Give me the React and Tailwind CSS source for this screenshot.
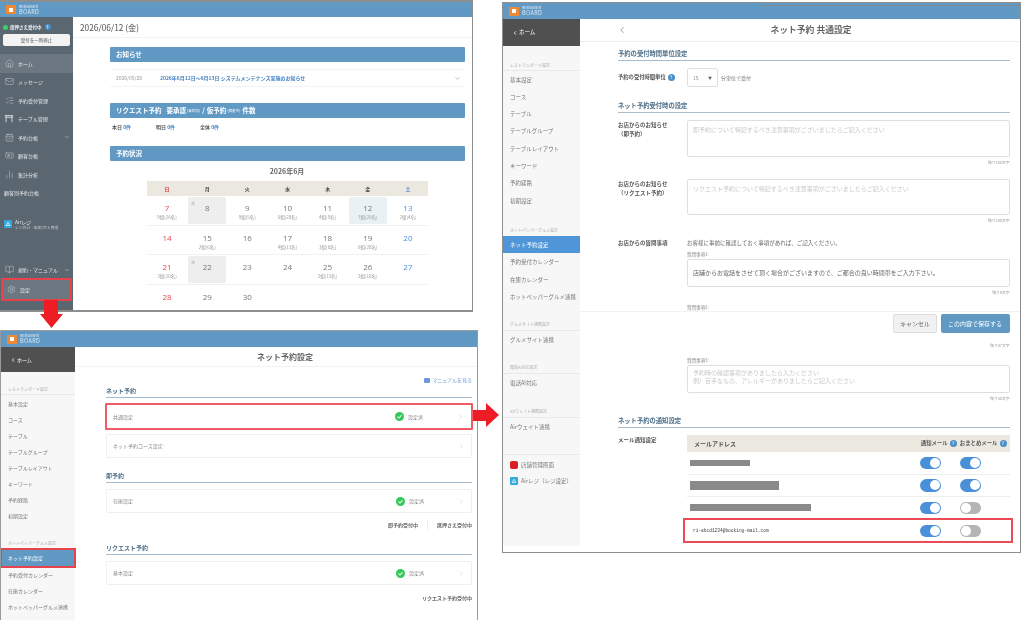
import React from "react";
import { House, Mail, ListChecks, CalendarDays, IdCard, ChartNoAxesColumn, BookOpen, Settings, ChevronDown, ChevronRight, ChevronLeft } from "lucide-react";

const CJK = { fontFamily: '"Noto Sans CJK JP","Noto Sans",sans-serif' };

function Logo() {
  return (
    <div className="flex items-center gap-[3px]">
      <div className="w-[10px] h-[9px] bg-[#ee8a35] flex items-center justify-center">
        <div className="w-[4px] h-[4px] bg-white" />
      </div>
      <div className="flex flex-col text-[#dfeaf3]">
        <span className="text-[3.8px] leading-[4px] h-[4px] whitespace-nowrap">Restaurant</span>
        <span className="text-[5.5px] leading-[6px] h-[6px] tracking-[0.4px]">BOARD</span>
      </div>
    </div>
  );
}

function Help({ size = "w-[7px] h-[7px]" }) {
  return <span className={`${size} rounded-full bg-[#4a8fc8] text-white text-[4.5px] leading-none inline-flex items-center justify-center shrink-0`}>?</span>;
}

function TableIcon() {
  return (
    <svg viewBox="0 0 12 12" className="w-[11px] h-[11px]" fill="none" stroke="#d5dade" strokeWidth="1.1">
      <path d="M1 2.5h10M2.5 2.5v8M9.5 2.5v8M1 4.5h10" />
    </svg>
  );
}

function NavDark({ icon, label, active, chevron, boxed }) {
  return (
    <div className={`flex items-center pl-[4px] pr-[3px] gap-[3px] text-[5px] text-[#e4e7ea] ${active ? "bg-[#6c7781]" : ""} ${boxed ? "bg-[#6c7781] outline-2 outline-[#e8434d] -outline-offset-1 h-[21px] mx-[2px] pl-[2px]" : "h-[18.5px]"}`}>
      <span className="w-[10px] flex justify-center shrink-0">{icon}</span>
      <span className="ml-[1px] flex-1 whitespace-nowrap">{label}</span>
      {chevron && <ChevronDown size={6} color="#d5dade" />}
    </div>
  );
}

function Bar({ children, className = "" }) {
  return <div className={`h-[15px] rounded-[1px] bg-[#6199c5] text-white text-[6.5px] font-bold flex items-center pl-[6px] whitespace-nowrap ${className}`}>{children}</div>;
}

const cal = [
  [["7", "9組(26名)", "r"], ["8", "", "o"], ["9", "9組(5名)"], ["10", "6組(20名)"], ["11", "4組(9名)"], ["12", "7組(26名)", "t"], ["13", "2組(4名)", "b"]],
  [["14", "", "r"], ["15", "2組(6名)"], ["16", ""], ["17", "4組(13名)"], ["18", "3組(8名)"], ["19", "6組(28名)"], ["20", "", "b"]],
  [["21", "3組(10名)", "r"], ["22", "", "o"], ["23", ""], ["24", ""], ["25", "2組(15名)"], ["26", "3組(10名)"], ["27", "", "b"]],
  [["28", "", "r"], ["29", ""], ["30", ""], ["", ""], ["", ""], ["", ""], ["", ""]],
];

function Calendar() {
  const heads = ["日", "月", "火", "水", "木", "金", "土"];
  return (
    <div className="ml-[74px] w-[281px]">
      <div className="h-[20px] flex items-center justify-center text-[#666] text-[7px] font-bold pr-[1px]">2026年6月</div>
      <div className="h-[15px] bg-[#ebe8e0] grid grid-cols-7 text-[5px] font-bold text-[#444] text-center items-center">
        {heads.map((h, i) => (
          <span key={h} className={i === 0 ? "text-[#e0383e]" : i === 6 ? "text-[#3f82d8]" : ""}>{h}</span>
        ))}
      </div>
      {cal.map((row, ri) => (
        <div key={ri} className={`grid grid-cols-7 h-[29.5px] ${ri < 3 ? "border-b border-[#f1f1f1]" : ""}`}>
          {row.map(([n, s, k], ci) => {
            const bg = k === "o" ? "bg-[#eeeeee]" : k === "t" ? "bg-[#e9f1f5]" : "";
            const color = k === "r" ? "text-[#e8474c]" : k === "b" ? "text-[#4a8fe0]" : "text-[#777]";
            return (
              <div key={ci} className={`relative mx-[1px] my-[1px] rounded-[2px] flex flex-col items-center ${bg}`}>
                {k === "o" && <span className="absolute left-[3px] top-[4px] text-[3.5px] text-[#999]">休</span>}
                <span className={`mt-[5px] text-[8px] leading-[11px] ${color}`} style={{ fontFamily: '"Open Sans",sans-serif' }}>{n}</span>
                {s && <span className="text-[4.5px] leading-[8px] text-[#999] whitespace-nowrap">{s}</span>}
              </div>
            );
          })}
        </div>
      ))}
    </div>
  );
}

function Window1() {
  return (
    <section className="absolute left-0 top-0 w-[473px] h-[312px] border-t-2 border-b-2 border-r border-[#8e8e8e] bg-white flex flex-col overflow-hidden">
      <header className="h-[15px] shrink-0 bg-[#6199c5] flex items-center pl-[6px]"><Logo /></header>
      <div className="flex flex-1 min-h-0">
        <aside className="w-[73px] shrink-0 bg-[#5a6670] flex flex-col">
          <div className="h-[17px] flex items-center pl-[3px] pt-[3px] gap-[2px] text-[4.5px] text-[#eef0f2] font-bold whitespace-nowrap">
            <span className="w-[5px] h-[5px] rounded-full bg-[#3fcf6a]" />
            席押さえ受付中 <Help size="w-[6px] h-[6px] ml-[1px]" />
          </div>
          <div className="mx-[3px] h-[12px] rounded-[2px] bg-[#f3f3f3] text-[#555] text-[4.5px] flex items-center justify-center">受付を一時停止</div>
          <div className="h-[8px]" />
          <NavDark active label="ホーム" icon={<House size={9} color="#d5dade" strokeWidth={1.2} />} />
          <NavDark label="メッセージ" icon={<Mail size={9} color="#d5dade" strokeWidth={1.2} />} />
          <NavDark label="予約受付管理" icon={<ListChecks size={9} color="#d5dade" strokeWidth={1.2} />} />
          <NavDark label="テーブル管理" icon={<TableIcon />} />
          <NavDark chevron label="予約台帳" icon={<CalendarDays size={9} color="#d5dade" strokeWidth={1.2} />} />
          <NavDark label="顧客台帳" icon={<IdCard size={9} color="#d5dade" strokeWidth={1.2} />} />
          <NavDark label="集計分析" icon={<ChartNoAxesColumn size={9} color="#d5dade" strokeWidth={1.2} />} />
          <div className="h-[19px] flex items-center pl-[4px] text-[5px] text-[#e4e7ea] whitespace-nowrap">顧客別予約台帳</div>
          <div className="mt-[16px] flex items-center gap-[3px] pl-[4px]">
            <span className="w-[8px] h-[8px] rounded-[1px] bg-[#32a7e0] flex items-center justify-center">
              <svg viewBox="0 0 8 8" className="w-[6px] h-[6px]" fill="none" stroke="white" strokeWidth="1"><path d="M4 1.5 L6.5 6 H1.5 Z" /></svg>
            </span>
            <div className="flex flex-col">
              <span className="text-[5px] leading-[6px] text-[#e4e7ea]">Airレジ</span>
              <span className="text-[3.8px] leading-[5px] text-[#c2c8cd] whitespace-nowrap">レジ会計・勘案/売上管理</span>
            </div>
          </div>
          <div className="flex-1" />
          <NavDark chevron label="規約・マニュアル" icon={<BookOpen size={9} color="#d5dade" strokeWidth={1.2} />} />
          <NavDark boxed label="設定" icon={<Settings size={9} color="#d5dade" strokeWidth={1.2} />} />
          <div className="h-[10px]" />
        </aside>
        <main className="flex-1 min-w-0">
          <div className="h-[21px] border-b border-[#f2f2f2] pl-[7px] flex items-center text-[8.3px] text-[#555]">2026/06/12 (金)</div>
          <div className="pl-[37px] pr-[7px]">
            <Bar className="mt-[9px]">お知らせ</Bar>
            <div className="mt-[7px] h-[18px] border-y border-[#f3f3f3] flex items-center pl-[6px] pr-[4px] text-[5px]">
              <span className="w-[44px] text-[#999]">2026/05/28</span>
              <span className="flex-1 text-[#3f7fc4] font-bold whitespace-nowrap">2026年6月12日～6月13日 システムメンテナンス実施のお知らせ</span>
              <ChevronDown size={7} color="#999" />
            </div>
            <Bar className="mt-[16px]">
              <span>リクエスト予約</span>
              <span className="ml-[5px]">要承認</span>
              <span className="text-[3.6px] font-normal ml-[1px]">(未対応)</span>
              <span className="ml-[2px]">/</span>
              <span className="ml-[2px]">仮予約</span>
              <span className="text-[3.6px] font-normal ml-[1px]">(保留中)</span>
              <span className="ml-[2px]">件数</span>
            </Bar>
            <div className="h-[18px] flex items-center pl-[2px] text-[5px] font-bold text-[#555]">
              <span className="w-[44px]">本日 <span className="text-[#3f7fc4]">0件</span></span>
              <span className="w-[44px]">明日 <span className="text-[#3f7fc4]">0件</span></span>
              <span>全体 <span className="text-[#3f7fc4]">0件</span></span>
            </div>
            <Bar className="mt-[10px]">予約状況</Bar>
          </div>
          <Calendar />
        </main>
      </div>
    </section>
  );
}

function LightItem({ children, active, boxed, h = "h-[16px]", text = "text-[5px]" }) {
  return (
    <div className={`${h} ${text} flex items-center pl-[7px] whitespace-nowrap ${active ? "text-white" : "text-[#777]"} ${active === "w2" ? "bg-[#6199c5]" : active ? "bg-[#4f96d8]" : ""} ${boxed ? "outline-2 outline-[#e8434d] -outline-offset-1" : ""}`}>{children}</div>
  );
}

function LightHead({ children, className = "", text = "text-[4px]", h = "h-[12px]" }) {
  return <div className={`${h} ${text} flex items-center pl-[7px] text-[#aaa] whitespace-nowrap border-b border-[#e9e9e9] ${className}`}>{children}</div>;
}

function Done() {
  return (
    <span className="flex items-center gap-[4px] text-[5px] text-[#888]">
      <svg viewBox="0 0 10 10" className="w-[9px] h-[9px]"><circle cx="5" cy="5" r="5" fill="#35c75a" /><path d="M2.8 5.2 L4.4 6.7 L7.2 3.6" fill="none" stroke="white" strokeWidth="1.2" /></svg>
      設定済
    </span>
  );
}

function Window2Row({ label, done, boxed, className = "" }) {
  return (
    <div className={`rounded-[1px] flex items-center pl-[6px] text-[5px] text-[#888] ${boxed ? "border-2 border-[#ee5d66] h-[27px] -mx-[1px] pr-[7px]" : "border border-[#f0f0f0] h-[24px] pr-[6px]"} ${className}`}>
      <span className="flex-1">{label}</span>
      {done && <Done />}
      <ChevronRight size={7} color="#c4c4c4" className="ml-[34px]" />
    </div>
  );
}

function SecHead({ children, h = "h-[11px]", text = "text-[6px]", className = "" }) {
  return <div className={`${h} ${text} flex items-end pb-[2px] leading-[8px] border-b border-[#a6bccd] font-bold text-[#4f6f88] whitespace-nowrap ${className}`}>{children}</div>;
}

function Window2() {
  return (
    <section className="absolute left-0 top-[330px] w-[478px] h-[292px] border-t border-r border-l border-[#9a9a9a] bg-white flex flex-col overflow-hidden">
      <header className="h-[16px] shrink-0 bg-[#6199c5] flex items-center pl-[6px]"><Logo /></header>
      <div className="flex flex-1 min-h-0">
        <aside className="w-[74px] shrink-0 bg-[#f7f7f7] flex flex-col">
          <div className="h-[25px] bg-[#505050] text-white text-[5px] flex items-center pl-[9px] gap-[1px]"><ChevronLeft size={6} strokeWidth={3} />ホーム</div>
          <LightHead className="mt-[11px]" h="h-[12px]">レストランボード設定</LightHead>
          <div className="h-[1px]" />
          <LightItem>基本設定</LightItem>
          <LightItem>コース</LightItem>
          <LightItem>テーブル</LightItem>
          <LightItem>テーブルグループ</LightItem>
          <LightItem>テーブルレイアウト</LightItem>
          <LightItem>キーワード</LightItem>
          <LightItem>予約経路</LightItem>
          <LightItem>初期設定</LightItem>
          <div className="mt-[13px] h-[12px] text-[4px] flex items-center pl-[7px] text-[#aaa] whitespace-nowrap">ホットペッパーグルメ設定</div>
          <LightItem active="w2" boxed h="h-[18px]">ネット予約設定</LightItem>
          <LightItem>予約受付カレンダー</LightItem>
          <LightItem>在庫カレンダー</LightItem>
          <LightItem>ホットペッパーグルメ連携</LightItem>
        </aside>
        <main className="flex-1 min-w-0">
          <div className="h-[20px] border-b border-[#f2f2f2] flex items-center justify-center text-[8px] font-bold text-[#666] pl-[18px]">ネット予約設定</div>
          <div className="pl-[31px] pr-[5px]">
            <div className="h-[21px] flex items-center justify-end gap-[2px] text-[5px] text-[#6a9bd8] pt-[5px]">
              <span className="w-[6px] h-[5px] bg-[#6a9bd8] rounded-[1px]" />マニュアルを見る
            </div>
            <SecHead h="h-[10px]">ネット予約</SecHead>
            <Window2Row className="mt-[5px]" boxed label="共通設定" done />
            <Window2Row className="mt-[4px]" label="ネット予約コース設定" />
            <SecHead className="mt-[14px]">即予約</SecHead>
            <Window2Row className="mt-[6px]" label="在庫設定" done />
            <div className="h-[24px] flex items-center justify-end text-[5px] font-bold text-[#666]">
              <span>即予約受付中</span>
              <span className="w-px h-[10px] bg-[#eee] mx-[9px]" />
              <span>席押さえ受付中</span>
            </div>
            <SecHead className="mt-[7px]">リクエスト予約</SecHead>
            <Window2Row className="mt-[6px]" label="基本設定" done />
            <div className="h-[26px] flex items-center justify-end text-[5px] font-bold text-[#666]">リクエスト予約受付中</div>
          </div>
        </main>
      </div>
    </section>
  );
}

function Area({ h, children, className = "" }) {
  return <div className={`${h} border border-[#dfdfdf] rounded-[2px] px-[5px] pt-[4px] text-[6px] leading-[9px] text-[#c9c9c9] bg-white ${className}`}>{children}</div>;
}

function Count({ children }) {
  return <div className="h-[12px] text-[3.8px] text-[#999] flex items-center justify-end">{children}</div>;
}

function Field({ label, children }) {
  return (
    <div className="flex">
      <div className="w-[69px] shrink-0 text-[5.5px] leading-[8.5px] font-bold text-[#555] whitespace-pre-line pt-[1px]">{label}</div>
      <div className="flex-1 min-w-0">{children}</div>
    </div>
  );
}

function Toggle({ on }) {
  return (
    <span className={`w-[21px] h-[12.5px] rounded-full flex items-center ${on ? "bg-[#4a90d9] justify-end" : "bg-[#b5b5b5] justify-start"}`}>
      <span className={`w-[10px] h-[10px] rounded-full bg-white ${on ? "mr-[1px]" : "ml-[1px]"}`} />
    </span>
  );
}

function MailRow({ bar, toggles, email, last }) {
  return (
    <div className={`relative h-[22.5px] flex items-center ${last ? "" : "border-b border-[#eee]"}`}>
      <div className="flex-1 min-w-0 pl-[3px]">
        {bar && <div className={`${bar} bg-[#8a8a8a]`} />}
        {email && <span className="block pl-[3px] text-[4.5px] leading-[6px] text-[#444]" style={{ fontFamily: '"Liberation Mono",monospace' }}>{email}</span>}
      </div>
      <div className="w-[30px] shrink-0"><Toggle on={toggles[0]} /></div>
      <div className="w-[60px] shrink-0 pl-[10px]"><Toggle on={toggles[1]} /></div>
      {email && <div className="absolute -left-[4px] -right-[3px] -top-[2px] h-[25px] border-2 border-[#ec4a54]" />}
    </div>
  );
}

function Window3() {
  return (
    <section className="absolute left-[502px] top-[2px] w-[519px] h-[550.5px] border-[1.5px] border-[#8e8e8e] bg-white flex flex-col overflow-hidden">
      <header className="relative h-[16px] shrink-0 bg-[#6199c5] flex items-center pl-[6px]">
        <Logo />
        <div className="absolute left-[258px] right-0 top-[2px] h-px bg-[#7d8a94]" />
      </header>
      <div className="flex flex-1 min-h-0">
        <aside className="w-[77px] shrink-0 bg-[#f7f7f7] flex flex-col mb-[6px]">
          <div className="h-[27px] bg-[#505050] text-white text-[5.5px] flex items-center pl-[9px] gap-[1px]"><ChevronLeft size={6} strokeWidth={3} />ホーム</div>
          <LightHead className="mt-[13px]" h="h-[12px]">レストランボード設定</LightHead>
          {["基本設定", "コース", "テーブル", "テーブルグループ", "テーブルレイアウト", "キーワード", "予約経路", "初期設定"].map((t) => (
            <LightItem key={t} h="h-[17.3px]" text="text-[5.5px]">{t}</LightItem>
          ))}
          <div className="mt-[15px] h-[12px] text-[4px] flex items-center pl-[7px] text-[#aaa] whitespace-nowrap">ホットペッパーグルメ設定</div>
          <LightItem active h="h-[17px]" text="text-[5.5px]">ネット予約設定</LightItem>
          {["予約受付カレンダー", "在庫カレンダー", "ホットペッパーグルメ連携"].map((t) => (
            <LightItem key={t} h="h-[17.5px]" text="text-[5.5px]">{t}</LightItem>
          ))}
          <LightHead className="mt-[12px]" h="h-[13px]">グルメサイト連携設定</LightHead>
          <LightItem h="h-[18px]" text="text-[5.5px]">グルメサイト連携</LightItem>
          <LightHead className="mt-[12px]" h="h-[13px]">電話AI対応設定</LightHead>
          <LightItem h="h-[18px]" text="text-[5.5px]">電話AI対応</LightItem>
          <LightHead className="mt-[13px]" h="h-[13px]">Airウェイト連携設定</LightHead>
          <LightItem h="h-[18px]" text="text-[5.5px]">Airウェイト連携</LightItem>
          <div className="mt-[18px] border-t border-[#e9e9e9] pt-[2px] pl-[7px] flex items-center gap-[3px] h-[19px] text-[5.5px] text-[#777]">
            <span className="w-[8px] h-[8px] rounded-[2px] bg-[#d81f26]" />店舗管理画面
          </div>
          <div className="pl-[7px] flex items-center gap-[3px] h-[17px] text-[5.5px] text-[#777] whitespace-nowrap">
            <span className="w-[8px] h-[8px] rounded-[1px] bg-[#32a7e0] flex items-center justify-center">
              <svg viewBox="0 0 8 8" className="w-[6px] h-[6px]" fill="none" stroke="white" strokeWidth="1"><path d="M4 1.5 L6.5 6 H1.5 Z" /></svg>
            </span>
            Airレジ（レジ設定）
          </div>
        </aside>
        <main className="relative flex-1 min-w-0">
          <div className="relative h-[23px] border-b border-[#eee] flex items-center justify-center text-[8.8px] font-bold text-[#666] pl-[22px]">
            <ChevronLeft size={10} color="#888" className="absolute left-[37px]" />
            ネット予約 共通設定
          </div>
          <div className="pl-[38px] pr-[10.5px]">
            <SecHead className="mt-[7px]" h="h-[12px]" text="text-[6.3px]">予約の受付時間単位設定</SecHead>
            <div className="mt-[7px] h-[19px] flex items-center">
              <div className="w-[69px] shrink-0 flex items-center gap-[2px] text-[5.3px] font-bold text-[#555] whitespace-nowrap">予約の受付時間単位 <Help /></div>
              <div className="w-[31px] h-[19px] border border-[#dfdfdf] rounded-[2px] flex items-center justify-between pl-[5px] pr-[5px] text-[5px] text-[#888]">15<span className="text-[4px] text-[#666]">▼</span></div>
              <span className="ml-[3px] text-[5px] text-[#777]">分単位で受付</span>
            </div>
            <SecHead className="mt-[13px]" h="h-[13px]" text="text-[6.3px]">ネット予約受付時の設定</SecHead>
            <div className="mt-[7px]">
              <Field label={"お店からのお知らせ\n（即予約）"}>
                <Area h="h-[37px]">即予約について特記するべき注意事項がございましたらご記入ください</Area>
                <Count>残り100文字</Count>
              </Field>
            </div>
            <div className="mt-[10px]">
              <Field label={"お店からのお知らせ\n（リクエスト予約）"}>
                <Area h="h-[36px]">リクエスト予約について特記するべき注意事項がございましたらご記入ください</Area>
                <Count>残り200文字</Count>
              </Field>
            </div>
            <div className="mt-[11px]">
              <Field label="お店からの質問事項">
                <div className="h-[10px] flex items-center text-[5.5px] text-[#666]">お客様に事前に確認しておく事項があれば、ご記入ください。</div>
                <div className="mt-[1px] h-[10px] flex items-center text-[4.5px] text-[#888]">質問事項1:</div>
                <Area h="h-[28px]" className="!text-[#666] !pt-[8px]">店舗からお電話をさせて頂く場合がございますので、ご都合の良い時間帯をご入力下さい。</Area>
                <Count>残り9文字</Count>
                <div className="mt-[3px] h-[10px] flex items-center text-[4.5px] text-[#888]">質問事項2:</div>
                <Area h="h-[28px]" />
                <Count>残り47文字</Count>
                <div className="mt-[3px] h-[10px] flex items-center text-[4.5px] text-[#888]">質問事項3:</div>
                <Area h="h-[28px]" className="!pt-[3px] !leading-[8px]">予約時の確認事項がありましたら入力ください<br />例）苦手なもの、アレルギーがありましたらご記入ください</Area>
                <Count>残り50文字</Count>
              </Field>
            </div>
            <SecHead className="mt-[10px]" h="h-[13px]" text="text-[6.3px]">ネット予約の通知設定</SecHead>
            <div className="mt-[7px]">
              <Field label="メール通知設定">
                <div className="h-[17px] bg-[#ebe8e0] flex items-center pl-[7px] pr-[3px] text-[5.4px] font-bold text-[#555] whitespace-nowrap">
                  <span className="flex-1 text-[6px]">メールアドレス</span>
                  <span className="flex items-center gap-[2px]">通知メール <Help /></span>
                  <span className="ml-[3px] flex items-center gap-[2px]">おまとめメール <Help /></span>
                </div>
                <MailRow bar="w-[60px] h-[6px]" toggles={[true, true]} />
                <MailRow bar="w-[89px] h-[9px]" toggles={[true, true]} />
                <MailRow bar="w-[121px] h-[7px]" toggles={[true, false]} />
                <MailRow last email="ri-abcd1234@booking-mail.com" toggles={[true, false]} />
              </Field>
            </div>
          </div>
          <div className="absolute left-0 right-0 top-[292px] h-[29px] bg-white border-t border-[#f2f2f2] flex items-start justify-end gap-[3.5px] pt-[2px] pr-[10.5px]">
            <button className="w-[44px] h-[19px] rounded-[2px] bg-[#f1f1f1] border border-[#ddd] text-[6px] text-[#666]">キャンセル</button>
            <button className="w-[69px] h-[19px] rounded-[2px] bg-[#6199c5] text-[6px] text-white">この内容で保存する</button>
          </div>
        </main>
      </div>
    </section>
  );
}

export default function App() {
  return (
    <div className="relative w-[1024px] h-[620px] bg-white overflow-hidden blur-[0.3px]" style={CJK}>
      <Window1 />
      <Window2 />
      <Window3 />
      <svg viewBox="0 0 23 28" className="absolute left-[40px] top-[300px] w-[23px] h-[28px]">
        <path d="M4 0H18V14H23L11.5 28L0 14H4Z" fill="#ee1c25" />
      </svg>
      <svg viewBox="0 0 26 24" className="absolute left-[473px] top-[403px] w-[26px] h-[24px]">
        <path d="M0 7H13V0L26 12L13 24V18H0Z" fill="#ee1c25" />
      </svg>
    </div>
  );
}
